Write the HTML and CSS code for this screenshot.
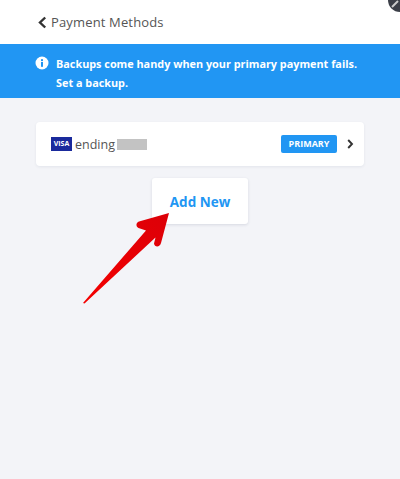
FILE: index.html
```html
<!DOCTYPE html>
<html lang="en">
<head>
<meta charset="utf-8">
<title>Payment Methods</title>
<link rel="stylesheet" href="styles.css">
</head>
<body>
<div class="page">
  <header class="header">
    <svg class="back" viewBox="0 0 9 13" width="9" height="13"><path d="M7.200 1.500 2 6.500l5.200 5" fill="none" stroke="#333" stroke-width="2.400"/></svg>
    <span class="title">Payment Methods</span>
  </header>
  <div class="banner">
    <svg class="info" viewBox="0 0 14 14" width="14" height="14"><circle cx="7" cy="7" r="6.500" fill="#fff"/><rect x="6" y="6" width="2" height="4.800" fill="#2196f3"/><rect x="6" y="3.200" width="2" height="1.900" fill="#2196f3"/></svg>
    <p class="banner-text">Backups come handy when your primary payment fails.<br>Set a backup.</p>
  </div>
  <main class="content">
    <div class="card">
      <span class="visa">VISA</span>
      <span class="ending">ending</span>
      <span class="mask"></span>
      <span class="badge">PRIMARY</span>
      <svg class="chev" viewBox="0 0 7 10" width="7" height="10"><path d="M1.200 1 5 5 1.200 9" fill="none" stroke="#333" stroke-width="1.900"/></svg>
    </div>
    <button class="add">Add New</button>
  </main>
  <svg class="arrow" viewBox="0 0 400 479" width="400" height="479">
    <defs><linearGradient id="red" x1="0" y1="1" x2="1" y2="0"><stop offset="0" stop-color="#f40000"/><stop offset="1" stop-color="#dc0008"/></linearGradient></defs>
    <path d="M83 303 146 230.500 138.500 228C135.500 226.500 136 222.500 139 221.500L169 213 161 243C160 247.500 154.500 247.500 154 243.500L155.500 237.500 84.500 303.500Z" fill="url(#red)"/>
  </svg>
  <div class="corner"><svg viewBox="0 0 12 12" width="12" height="12"><path d="M2 9 8 3" stroke="#ccc" stroke-width="2"/></svg></div>
</div>
</body>
</html>
```
FILE: styles.css
```css
* { box-sizing: border-box; }
html, body { margin: 0; height: 100%; }
body { font-family: "Open Sans", sans-serif; background: #f3f4f8; overflow: hidden; }
.page { position: relative; width: 400px; height: 479px; display: flex; flex-direction: column; overflow: hidden; }
.header { height: 44px; background: #fff; display: flex; align-items: center; padding-left: 38px; gap: 4px; }
.back { flex: none; }
.title { font-size: 13px; color: #555; letter-spacing: .15px; }
.banner { height: 54px; background: #2196f3; display: flex; align-items: flex-start; padding: 11px 0 0 35px; gap: 7px; }
.info { flex: none; margin-top: 1px; }
.banner-text { margin: 0; font-size: 10.850px; line-height: 18.500px; font-weight: 700; color: #fff; }
.content { flex: 1; display: flex; flex-direction: column; align-items: center; padding-top: 24px; gap: 12px; }
.card { width: 328px; height: 44px; background: #fff; border-radius: 4px; box-shadow: 0 1px 3px rgba(40, 50, 90, .08); display: flex; align-items: center; padding: 0 10px 0 15px; }
.visa { width: 21px; height: 14px; background: #1a2a9c; color: #fff; font-size: 7px; font-weight: 700; line-height: 14px; text-align: center; margin-right: 3px; }
.ending { font-size: 12.500px; color: #555; margin-right: 2px; }
.mask { width: 30px; height: 11px; background: #c3c3c3; margin-top: 1px; }
.badge { margin-left: auto; width: 56px; height: 18px; background: #2196f3; border-radius: 2px; color: #fff; font-size: 9px; font-weight: 700; line-height: 18px; text-align: center; }
.chev { flex: none; margin-left: 10px; }
.add { width: 96px; height: 46px; border: 0; padding: 1px 0 0; background: #fff; border-radius: 3px; box-shadow: 0 1px 3px rgba(40, 50, 90, .14); color: #2196f3; font-family: "Open Sans", sans-serif; font-size: 13.500px; font-weight: 700; }
.arrow { position: absolute; left: 0; top: 0; pointer-events: none; }
.corner { position: absolute; left: 388px; top: -12px; width: 24px; height: 24px; border-radius: 50%; background: #3c3f48; padding: 10px 0 0 2px; }
.corner svg { display: block; }
```
